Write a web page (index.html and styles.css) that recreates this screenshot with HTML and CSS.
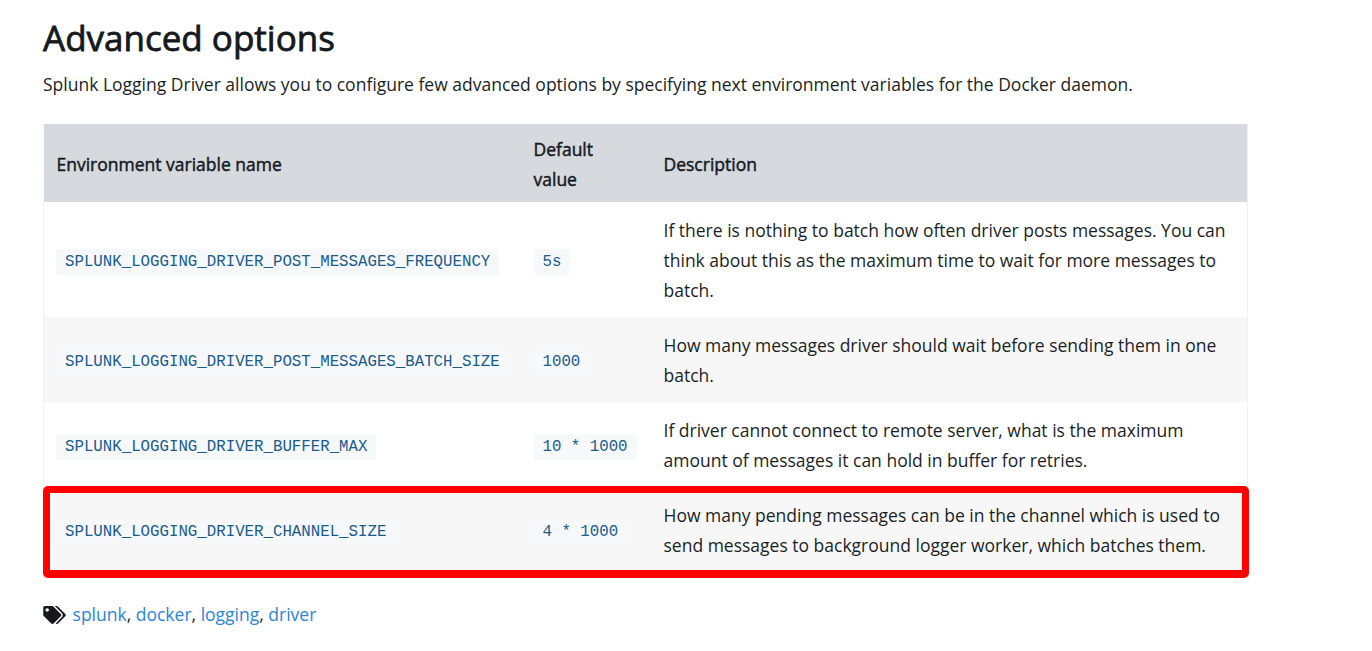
FILE: index.html
```html
<!DOCTYPE html>
<html lang="en">
<head>
<meta charset="utf-8">
<title>Advanced options</title>
<link rel="stylesheet" href="styles.css">
</head>
<body>
<main class="content">
  <h2 class="title">Advanced options</h2>
  <p class="intro">Splunk Logging Driver allows you to configure few advanced options by specifying next environment variables for the Docker daemon.</p>
  <div class="table-wrap">
    <table class="options">
      <colgroup><col class="col-name"><col class="col-default"><col class="col-desc"></colgroup>
      <thead>
        <tr><th>Environment variable name</th><th>Default value</th><th>Description</th></tr>
      </thead>
      <tbody>
        <tr>
          <td><code>SPLUNK_LOGGING_DRIVER_POST_MESSAGES_FREQUENCY</code></td>
          <td><code>5s</code></td>
          <td>If there is nothing to batch how often driver posts messages. You can think about this as the maximum time to wait for more messages to batch.</td>
        </tr>
        <tr>
          <td><code>SPLUNK_LOGGING_DRIVER_POST_MESSAGES_BATCH_SIZE</code></td>
          <td><code>1000</code></td>
          <td>How many messages driver should wait before sending them in one batch.</td>
        </tr>
        <tr>
          <td><code>SPLUNK_LOGGING_DRIVER_BUFFER_MAX</code></td>
          <td><code>10 * 1000</code></td>
          <td>If driver cannot connect to remote server, what is the maximum amount of messages it can hold in buffer for retries.</td>
        </tr>
        <tr>
          <td><code>SPLUNK_LOGGING_DRIVER_CHANNEL_SIZE</code></td>
          <td><code>4 * 1000</code></td>
          <td>How many pending messages can be in the channel which is used to send messages to background logger worker, which batches them.</td>
        </tr>
      </tbody>
    </table>
    <div class="highlight"></div>
  </div>
  <p class="tags">
    <svg class="tag-icon" viewBox="0 0 640 512" aria-hidden="true"><path d="M497.941 225.941L286.059 14.059A48 48 0 0 0 252.118 0H48C21.49 0 0 21.49 0 48v204.118a48 48 0 0 0 14.059 33.941l211.882 211.882c18.744 18.745 49.136 18.746 67.882 0l204.118-204.118c18.745-18.745 18.745-49.137 0-67.882zM112 160c-26.51 0-48-21.49-48-48s21.49-48 48-48 48 21.49 48 48-21.49 48-48 48zm513.941 133.823L421.823 497.941c-18.745 18.745-49.137 18.745-67.882 0l-.36-.36L527.64 323.522c16.999-16.999 26.36-39.6 26.36-63.64s-9.362-46.641-26.36-63.64L331.397 0h48.721a48 48 0 0 1 33.941 14.059l211.882 211.882c18.745 18.745 18.745 49.137 0 67.882z"/></svg>
    <a href="#">splunk</a>, <a href="#">docker</a>, <a href="#">logging</a>, <a href="#">driver</a>
  </p>
</main>
</body>
</html>
```
FILE: styles.css
```css
html, body {
  margin: 0;
  background: #fff;
}
body {
  font-family: "Open Sans", "Noto Sans", sans-serif;
  font-size: 17.5px;
  line-height: 30px;
  color: #1a1f25;
}
.content {
  width: 1205px;
  padding: 15px 0 0 43px;
}
.title {
  margin: 0;
  font-size: 35px;
  line-height: 46px;
  font-weight: 400;
  -webkit-text-stroke: 0.8px #15191e;
  color: #15191e;
}
.intro {
  margin: 8px 0 25px;
}
.table-wrap {
  position: relative;
}
.options {
  width: 100%;
  table-layout: fixed;
  border-collapse: collapse;
}
.col-name { width: 477px; }
.col-default { width: 130px; }
th {
  background: #d6d9de;
  text-align: left;
  font-weight: 400;
  -webkit-text-stroke: 0.45px #15191e;
  padding: 10px 14px 8px 13px;
  color: #15191e;
}
th:last-child {
  border-right: 1px solid #eceef0;
}
td {
  padding: 13px 14px 12px 13px;
  vertical-align: middle;
}
td:first-child {
  padding-left: 12px;
  border-left: 1px solid #f0f1f3;
}
td:last-child {
  border-right: 1px solid #f0f1f3;
}
tbody tr:nth-child(even) {
  background: #f7f7f8;
}
code {
  font-family: "Liberation Mono", monospace;
  font-size: 15.75px;
  color: #1a5c8c;
  background: #f6f8fa;
  padding: 4px 9px;
  border-radius: 3px;
  white-space: pre;
}
.highlight {
  position: absolute;
  left: 0;
  right: -1px;
  bottom: -6px;
  height: 92px;
  box-sizing: border-box;
  border: 7px solid #ff0000;
  border-bottom-width: 8px;
  border-radius: 5px;
}
.tags {
  margin: 27px 0 0;
  display: block;
}
.tag-icon {
  width: 23px;
  height: 18px;
  margin-right: 2px;
  vertical-align: -3px;
  fill: #15191e;
}
a {
  color: #2a85d8;
  text-decoration: none;
}
```
